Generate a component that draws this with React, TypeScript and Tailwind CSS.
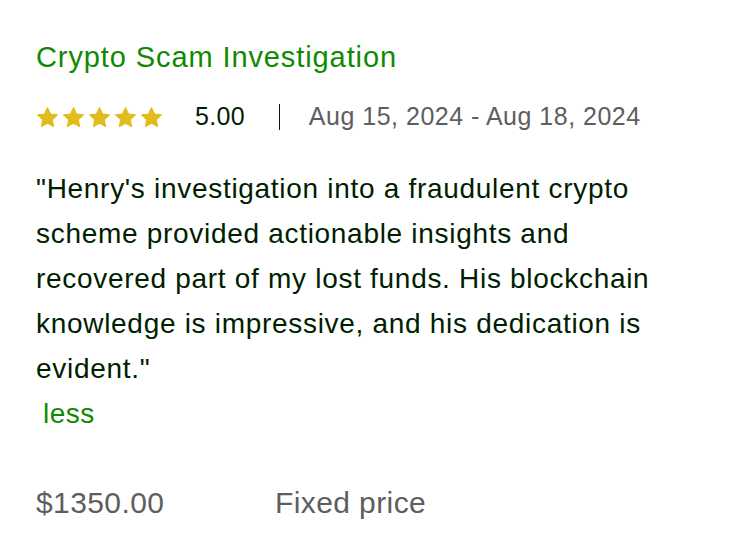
const Star = () => (
  <svg viewBox="0 0 24 24" className="w-[23px] h-[23px]" fill="#e0bd1c">
    <path d="M12 1.8l3.1 6.6 7.2.9-5.3 5 1.4 7.1L12 17.9l-6.4 3.5 1.4-7.1-5.3-5 7.2-.9z" strokeLinejoin="round" stroke="#e0bd1c" strokeWidth="1.2" />
  </svg>
);

export default function App() {
  return (
    <div className="w-[751px] h-[557px] bg-white pl-[36px] pt-[38px] font-['Liberation_Sans',Arial,sans-serif]">
      <h2 className="text-[29px] leading-[38px] tracking-[0.9px] text-[#108a00]">Crypto Scam Investigation</h2>
      <div className="flex items-center mt-[23px] h-[36px]">
        <div className="flex gap-[3px]">
          <Star />
          <Star />
          <Star />
          <Star />
          <Star />
        </div>
        <span className="ml-[32px] text-[25px] tracking-[0.3px] text-[#001e00]">5.00</span>
        <span className="ml-[34px] w-px h-[26px] bg-[#001e00]" />
        <span className="ml-[29px] text-[25px] tracking-[0.5px] text-[#5e5e5e]">Aug 15, 2024 - Aug 18, 2024</span>
      </div>
      <p className="mt-[31px] w-[640px] text-[28px] leading-[45px] tracking-[0.7px] text-[#001e00]">
        "Henry's investigation into a fraudulent crypto scheme provided actionable insights and recovered part of my lost funds. His blockchain knowledge is impressive, and his dedication is evident."
      </p>
      <button className="ml-[7px] text-[28px] leading-[45px] tracking-[0.5px] text-[#108a00]">less</button>
      <div className="flex mt-[47px] text-[30px] leading-[40px] tracking-[0.4px] text-[#5e5e5e]">
        <span className="w-[239px]">$1350.00</span>
        <span>Fixed price</span>
      </div>
    </div>
  );
}
